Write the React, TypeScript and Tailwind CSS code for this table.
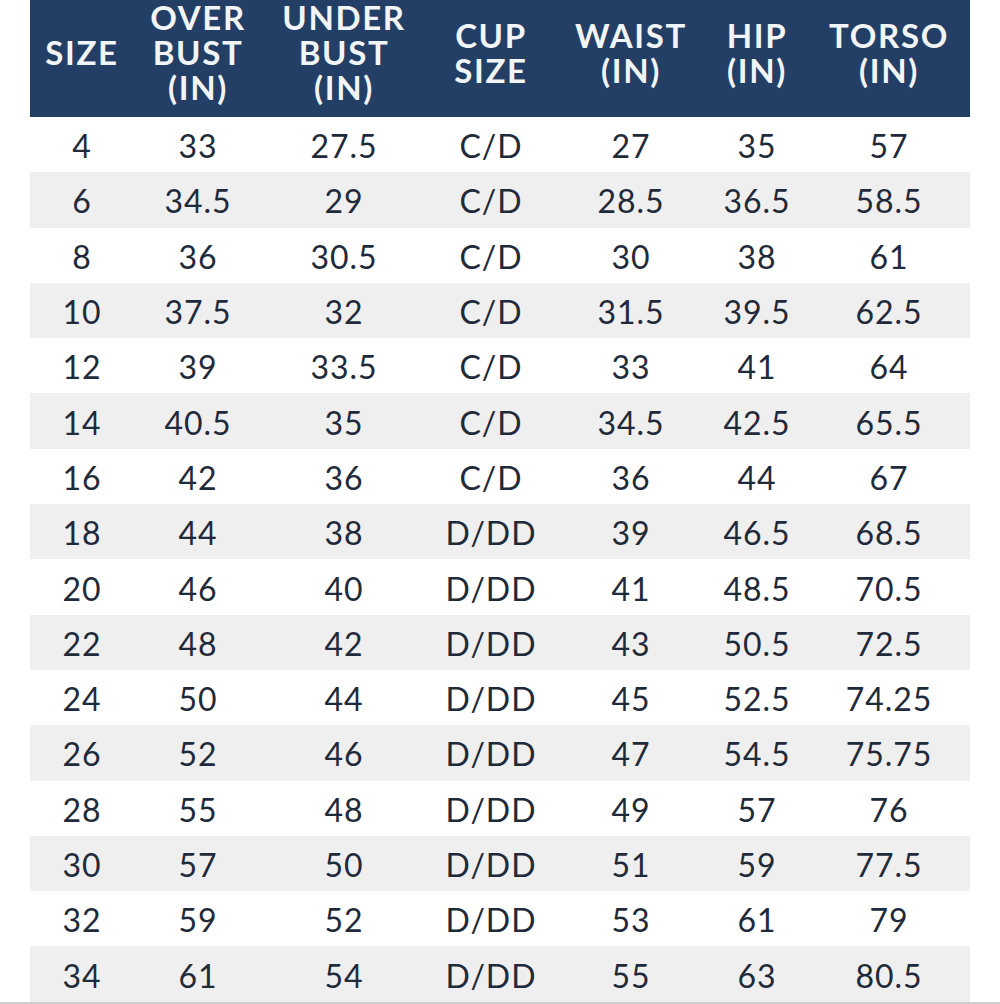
import React from 'react';

const COLUMNS: string[][] = [
    ['SIZE'],
    ['OVER', 'BUST', '(IN)'],
    ['UNDER', 'BUST', '(IN)'],
    ['CUP', 'SIZE'],
    ['WAIST', '(IN)'],
    ['HIP', '(IN)'],
    ['TORSO', '(IN)'],
];

const ROWS: string[][] = [
    ['4', '33', '27.5', 'C/D', '27', '35', '57'],
    ['6', '34.5', '29', 'C/D', '28.5', '36.5', '58.5'],
    ['8', '36', '30.5', 'C/D', '30', '38', '61'],
    ['10', '37.5', '32', 'C/D', '31.5', '39.5', '62.5'],
    ['12', '39', '33.5', 'C/D', '33', '41', '64'],
    ['14', '40.5', '35', 'C/D', '34.5', '42.5', '65.5'],
    ['16', '42', '36', 'C/D', '36', '44', '67'],
    ['18', '44', '38', 'D/DD', '39', '46.5', '68.5'],
    ['20', '46', '40', 'D/DD', '41', '48.5', '70.5'],
    ['22', '48', '42', 'D/DD', '43', '50.5', '72.5'],
    ['24', '50', '44', 'D/DD', '45', '52.5', '74.25'],
    ['26', '52', '46', 'D/DD', '47', '54.5', '75.75'],
    ['28', '55', '48', 'D/DD', '49', '57', '76'],
    ['30', '57', '50', 'D/DD', '51', '59', '77.5'],
    ['32', '59', '52', 'D/DD', '53', '61', '79'],
    ['34', '61', '54', 'D/DD', '55', '63', '80.5'],
];

const GRID = 'grid grid-cols-[104px_128px_164px_130px_150px_102px_162px]';

const App: React.FC = () => {
    return (
        <div
            className="w-[1000px] h-[1004px] bg-white flex flex-col overflow-hidden"
            style={{ fontFamily: 'Lato, "Open Sans", sans-serif' }}
        >
            <div className="mx-[30px]">
                {/* header */}
                <div className={`${GRID} h-[117px] bg-[#233f66] pb-[22px]`}>
                    {COLUMNS.map((lines, i) => (
                        <div key={i} className="flex flex-col items-center justify-center text-[33px] leading-[35px] font-bold tracking-[0.05em] text-[#f2f5f8]">
                            {lines.map((line) => (
                                <span key={line}>{line}</span>
                            ))}
                        </div>
                    ))}
                </div>

                {/* rows */}
                {ROWS.map((row, r) => (
                    <div
                        key={row[0]}
                        className={`${GRID} h-[55.3px] ${r % 2 === 1 ? 'bg-[#efefef]' : 'bg-white'}`}
                    >
                        {row.map((cell, c) => (
                            <div key={c} className="flex items-center justify-center pt-[3px] text-[32px] leading-none tracking-[0.03em] text-[#1f2a3a]">
                                {cell}
                            </div>
                        ))}
                    </div>
                ))}
            </div>
            <div className="flex-1 bg-[#cfcfcf]" />
        </div>
    );
};

export default App;
